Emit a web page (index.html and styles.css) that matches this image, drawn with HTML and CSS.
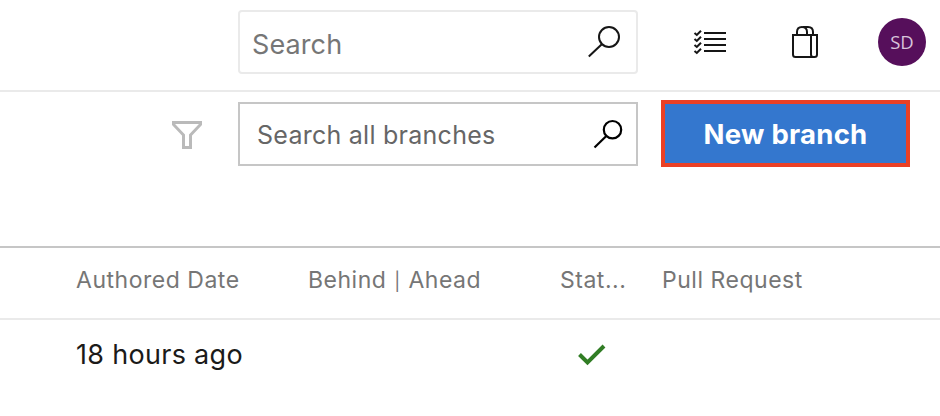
FILE: index.html
```html
<!DOCTYPE html>
<html lang="en">
<head>
<meta charset="utf-8">
<title>Branches</title>
<link rel="stylesheet" href="styles.css">
</head>
<body>
<header class="topbar">
  <div class="search search-global">
    <span class="search-label">Search</span>
    <svg class="icon-search-lg" width="34" height="34" viewBox="0 0 34 34"><circle cx="22" cy="12" r="10"/><path d="M14.800 19.200 1.800 31.500"/></svg>
  </div>
  <svg class="icon-list" width="34" height="26" viewBox="0 0 34 26"><path class="lines" d="M11 4h22M11 10h22M11 16h22M11 22h22"/><path class="ticks" d="m1.500 4 2.300 2L8 1.700M1.500 10l2.300 2L8 7.700M1.500 16l2.300 2L8 13.700M1.500 22l2.300 2L8 19.700"/></svg>
  <svg class="icon-bag" width="28" height="34" viewBox="0 0 28 34"><path d="M2 10h24v19.500q0 2.500-2.500 2.500h-19Q2 32 2 29.500zM20 10v19.500q0 2.500 2.500 2.500M6 10V7q0-5 5-5t5 5v3M12 2h5q5 0 5 5v3"/></svg>
  <div class="avatar">SD</div>
</header>
<section class="toolbar">
  <svg class="icon-filter" width="32" height="30" viewBox="0 0 32 30"><path d="M2.500 2.500h27v2L19.500 15v12.500h-7V15L2.500 4.500z"/></svg>
  <div class="search search-branches">
    <span class="search-label">Search all branches</span>
    <svg class="icon-search-md" width="30" height="30" viewBox="0 0 30 30"><circle cx="19.500" cy="10.700" r="8.700"/><path d="M13.300 17 1.500 28.500"/></svg>
  </div>
  <button class="new-branch">New branch</button>
</section>
<main class="table">
  <div class="row head">
    <span>Authored Date</span>
    <span>Behind <span class="bar">|</span> Ahead</span>
    <span>Stat...</span>
    <span>Pull Request</span>
  </div>
  <div class="row entry">
    <span>18 hours ago</span>
    <span></span>
    <svg class="icon-check" width="28" height="22" viewBox="0 0 28 22"><path d="m1.500 10.500 8 8L26 2"/></svg>
  </div>
</main>
</body>
</html>
```
FILE: styles.css
```css
* { box-sizing: border-box; }
body {
  margin: 0;
  height: 416px;
  overflow: hidden;
  background: #fff;
  color: #1b1a19;
  font-family: Inter, "Liberation Sans", sans-serif;
  white-space: nowrap;
}
svg { display: block; flex: none; fill: none; stroke: #161616; stroke-width: 2; }
.topbar {
  display: flex;
  height: 92px;
  padding: 10px 14px 0 238px;
  border-bottom: 2px solid #eaeaea;
}
.search {
  display: flex;
  flex: none;
  justify-content: space-between;
  width: 400px;
  height: 64px;
  line-height: 60px;
}
.search-global {
  padding: 2px 15px 0 12px;
  border: 2px solid #eaeaea;
  border-radius: 4px;
  color: #767676;
  font-size: 27px;
  letter-spacing: 0.1px;
  line-height: 62px;
}
.icon-search-lg { margin-top: 11px; }
.icon-list { margin: 19px 0 0 55px; }
.ticks { stroke-width: 2; }
.icon-bag { margin: 15px 0 0 64px; }
.avatar {
  width: 48px;
  height: 48px;
  margin: 8px 0 0 auto;
  border-radius: 50%;
  background: #560f5b;
  color: #d8c4da;
  font: 18.5px/48px "Open Sans", sans-serif;
  text-align: center;
}
.toolbar {
  display: flex;
  height: 154px;
  padding: 10px 0 0 171px;
}
.icon-filter { margin: 18px 35px 0 0; stroke: #bababa; stroke-width: 3; }
.search-branches {
  padding: 1px 13px 0 17px;
  border: 2px solid #c6c6c6;
  color: #666;
  font-size: 25px;
  letter-spacing: 0.26px;
}
.icon-search-md { margin-top: 14px; stroke: #000; stroke-width: 2.2; }
.new-branch {
  width: 249px;
  height: 67px;
  margin: -2px 0 0 23px;
  padding: 2px 0 0;
  border: 4px solid #ea4025;
  background: #3477ce;
  color: #fff;
  font: 700 27.5px/57px Inter, sans-serif;
  letter-spacing: 0.25px;
}
.row {
  display: grid;
  grid-template-columns: 232px 252px 102px 1fr;
  padding-left: 76px;
}
.head {
  height: 74px;
  border-top: 2px solid #c6c6c6;
  border-bottom: 2px solid #eaeaea;
  color: #767676;
  font-size: 23px;
  letter-spacing: 0.52px;
  line-height: 64px;
}
.bar { display: inline-block; font-size: 18px; line-height: 1; width: 8px; text-align: center; }
.entry { font-size: 27px; letter-spacing: 0.3px; line-height: 69px; }
.icon-check { margin: 24px 0 0 18px; stroke: #317d25; stroke-width: 4; }
```
